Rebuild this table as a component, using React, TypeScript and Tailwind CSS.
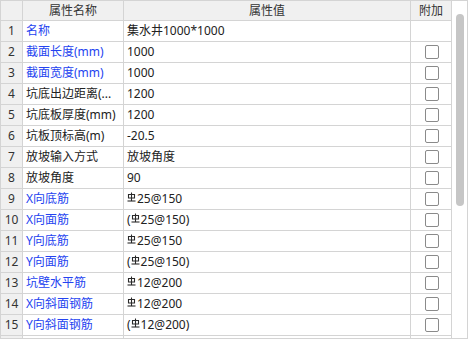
import React from "react";

const BLUE = "text-[#2443f0]";

function Rebar() {
  return (
    <svg width="9" height="10" viewBox="0 0 9 10" className="inline-block mr-[1px] relative top-[-2px]" fill="none" stroke="#2a2a2a" strokeWidth="1.1">
      <path d="M4.5 0.5V9" />
      <path d="M1.5 2.5H7.5V6H1.5Z" />
      <path d="M0.5 9H8.5" />
    </svg>
  );
}

type Row = { name: string; value: React.ReactNode; blue: boolean; check: boolean };

const rebar = (s: string, paren: boolean) => (
  <span className="inline-flex items-center">
    {paren && "("}
    <Rebar />
    {s}
    {paren && ")"}
  </span>
);

const rows: Row[] = [
  { name: "名称", value: "集水井1000*1000", blue: true, check: false },
  { name: "截面长度(mm)", value: "1000", blue: true, check: true },
  { name: "截面宽度(mm)", value: "1000", blue: true, check: true },
  { name: "坑底出边距离(...", value: "1200", blue: false, check: true },
  { name: "坑底板厚度(mm)", value: "1200", blue: false, check: true },
  { name: "坑板顶标高(m)", value: "-20.5", blue: false, check: true },
  { name: "放坡输入方式", value: "放坡角度", blue: false, check: true },
  { name: "放坡角度", value: "90", blue: false, check: true },
  { name: "X向底筋", value: rebar("25@150", false), blue: true, check: true },
  { name: "X向面筋", value: rebar("25@150", true), blue: true, check: true },
  { name: "Y向底筋", value: rebar("25@150", false), blue: true, check: true },
  { name: "Y向面筋", value: rebar("25@150", true), blue: true, check: true },
  { name: "坑壁水平筋", value: rebar("12@200", false), blue: true, check: true },
  { name: "X向斜面钢筋", value: rebar("12@200", false), blue: true, check: true },
  { name: "Y向斜面钢筋", value: rebar("12@200", true), blue: true, check: true },
];

export default function App() {
  return (
    <div
      className="w-[468px] h-[339px] border border-[#d4d4d4] bg-white flex overflow-hidden text-[12px] text-[#222]"
      style={{ fontFamily: '"Noto Sans", "Noto Sans CJK SC", sans-serif' }}
    >
      <div className="w-[451px] flex flex-col overflow-hidden">
        <div className="flex h-[20px] shrink-0 border-b border-[#d4d4d4] bg-[#f0f0f0] text-[#333] leading-[19px]">
          <div className="w-[22px] border-r border-[#d4d4d4]" />
          <div className="w-[101px] border-r border-[#d4d4d4] text-center">属性名称</div>
          <div className="w-[287px] border-r border-[#d4d4d4] text-center">属性值</div>
          <div className="w-[41px] border-r border-[#d4d4d4] text-center">附加</div>
        </div>
        {rows.map((r, i) => (
          <div key={i} className="flex h-[21px] shrink-0 border-b border-[#d4d4d4] leading-[20px]">
            <div className="w-[22px] border-r border-[#d4d4d4] bg-[#f0f0f0] text-center text-[#333]">{i + 1}</div>
            <div
              className={`w-[101px] border-r border-[#d4d4d4] pl-[3px] whitespace-nowrap overflow-hidden ${r.blue ? BLUE : "text-[#222]"}`}
            >
              {r.name}
            </div>
            <div className="w-[287px] border-r border-[#d4d4d4] pl-[3px] whitespace-nowrap overflow-hidden text-[#222]">
              {r.value}
            </div>
            <div className="w-[41px] border-r border-[#d4d4d4] flex items-center justify-center">
              {r.check && (
                <div className="w-[14px] h-[14px] rounded-[2px] border border-[#8a8a8a] bg-white ml-[1px]" />
              )}
            </div>
          </div>
        ))}
        <div className="flex h-[21px] shrink-0">
          <div className="w-[22px] border-r border-[#d4d4d4] bg-[#f0f0f0]" />
          <div className="w-[101px] border-r border-[#d4d4d4]" />
          <div className="w-[287px] border-r border-[#d4d4d4]" />
          <div className="w-[41px] border-r border-[#d4d4d4]" />
        </div>
      </div>
      <div className="w-[15px] shrink-0 pt-[13px] pl-[4px] bg-white">
        <div className="w-[8px] h-[192px] rounded-full bg-[#c6c6c6]" />
      </div>
    </div>
  );
}
